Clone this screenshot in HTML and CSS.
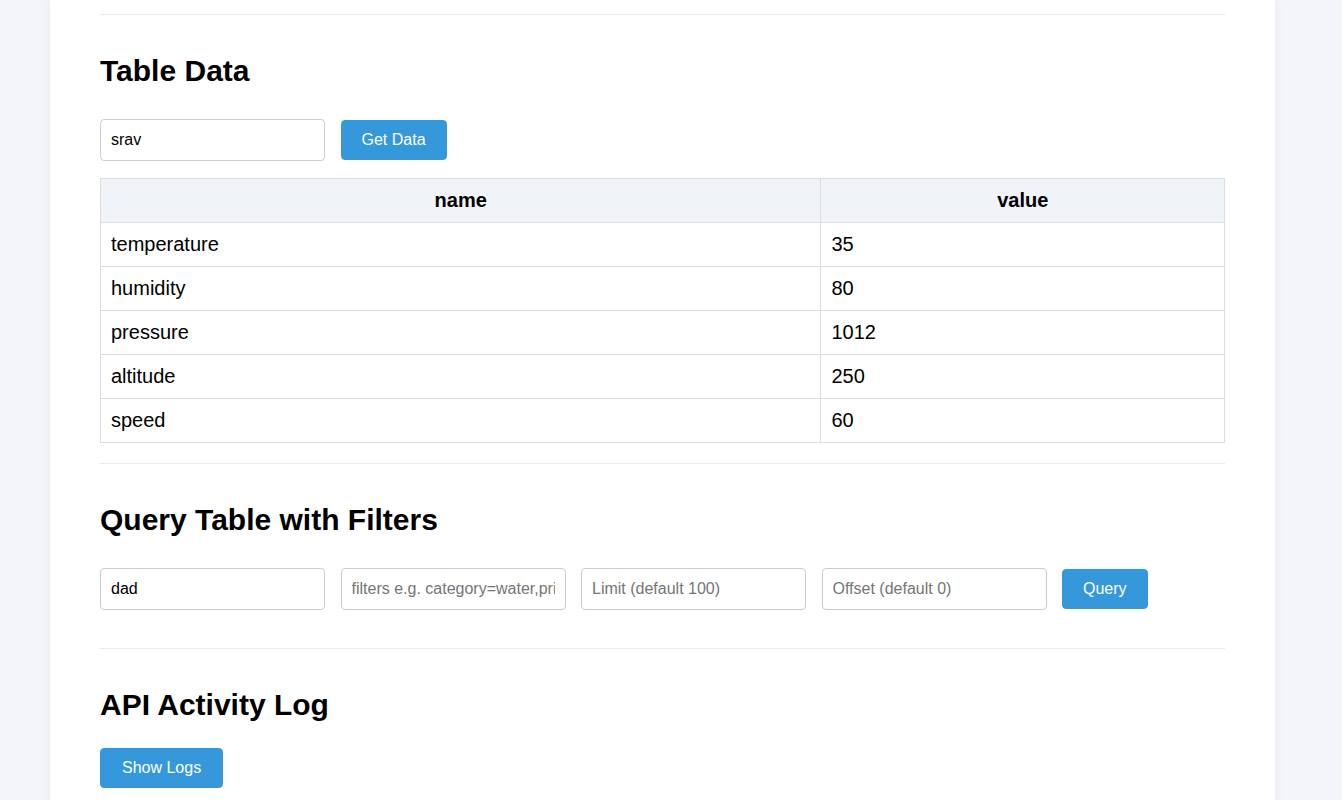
FILE: index.html
```html
<!DOCTYPE html>
<html lang="en">
<head>
<meta charset="utf-8">
<title>Table Data</title>
<link rel="stylesheet" href="styles.css">
</head>
<body>
<div class="container">
  <div class="section section-prev"></div>

  <div class="section">
    <h2 class="title">Table Data</h2>
    <div class="controls">
      <input class="field" type="text" value="srav">
      <button class="btn">Get Data</button>
    </div>
    <table class="data-table">
      <thead>
        <tr><th class="col-name">name</th><th>value</th></tr>
      </thead>
      <tbody>
        <tr><td>temperature</td><td>35</td></tr>
        <tr><td>humidity</td><td>80</td></tr>
        <tr><td>pressure</td><td>1012</td></tr>
        <tr><td>altitude</td><td>250</td></tr>
        <tr><td>speed</td><td>60</td></tr>
      </tbody>
    </table>
  </div>

  <div class="section">
    <h2 class="title">Query Table with Filters</h2>
    <div class="controls">
      <input class="field" type="text" value="dad">
      <input class="field" type="text" placeholder="filters e.g. category=water,price>10">
      <input class="field" type="text" placeholder="Limit (default 100)">
      <input class="field" type="text" placeholder="Offset (default 0)">
      <button class="btn">Query</button>
    </div>
    <div class="query-result"></div>
  </div>

  <div class="section section-last">
    <h2 class="title">API Activity Log</h2>
    <button class="btn btn-logs">Show Logs</button>
  </div>
</div>
</body>
</html>
```

FILE: styles.css
```css
html, body {
  margin: 0;
  padding: 0;
}

body {
  background: #f4f5f9;
  font-family: "Liberation Sans", Arial, sans-serif;
  color: #000;
  overflow: hidden;
}

.container {
  width: 1225px;
  margin-left: 50px;
  background: #fff;
  padding: 0 50px;
  box-sizing: border-box;
  box-shadow: 0 0 10px rgba(0, 0, 0, 0.06);
  min-height: 800px;
}

.section {
  padding: 39px 0 20px;
  border-bottom: 1px solid #eaeaea;
}

.section-prev {
  padding: 0;
  height: 14px;
}

.section-last {
  border-bottom: none;
}

.title {
  margin: 0;
  font-size: 30px;
  font-weight: bold;
  line-height: 34px;
}

.controls {
  margin-top: 31px;
  display: flex;
  align-items: center;
  gap: 15.5px;
}

.field {
  width: 225px;
  box-sizing: border-box;
  padding: 11px 10px;
  line-height: 18px;
  font-size: 16px;
  font-family: "Liberation Sans", Arial, sans-serif;
  color: #000;
  border: 1px solid #ccc;
  border-radius: 4px;
  background: #fff;
  outline: none;
}

.field::placeholder {
  color: #757575;
}

.btn {
  padding: 10px 20px;
  line-height: 18px;
  font-size: 16px;
  font-family: "Liberation Sans", Arial, sans-serif;
  color: #fff;
  background: #3498db;
  border: 1px solid #3498db;
  border-radius: 4px;
  cursor: pointer;
}

.btn-logs {
  margin-top: 26px;
  display: block;
  padding: 10px 21px;
}

.data-table {
  margin-top: 17px;
  width: 100%;
  border-collapse: collapse;
  font-size: 20px;
  line-height: 23px;
}

.data-table th,
.data-table td {
  border: 1px solid #ddd;
  padding: 10px;
}

.data-table th {
  background: #f0f3f7;
  font-weight: bold;
  text-align: center;
}

.data-table td {
  text-align: left;
}

.col-name {
  width: 64.1%;
}

.query-result {
  margin-top: 18px;
}
```
